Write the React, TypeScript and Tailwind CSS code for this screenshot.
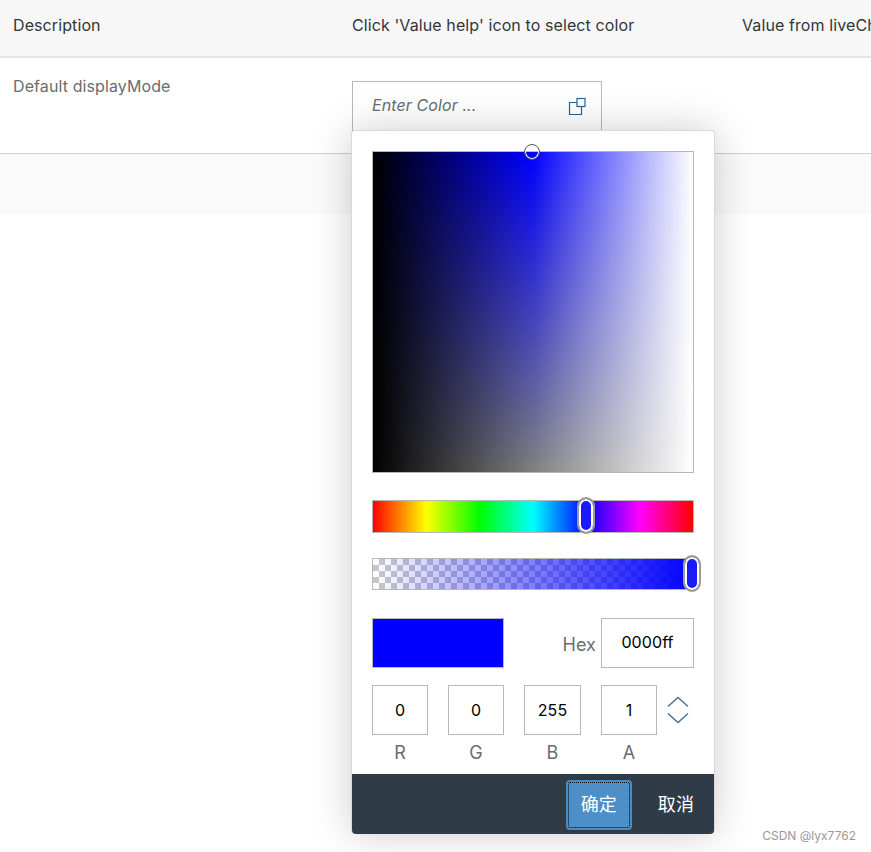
const boxClass = 'flex items-center justify-center border border-[#b8b8b8] bg-white text-base text-black'

function ValueHelpIcon() {
  return (
    <svg width="19" height="19" viewBox="0 0 19 19" fill="none" stroke="#2f5f8f" strokeWidth="1.2">
      <path d="M9 5.5H1.5V17.5H13.5V10" />
      <rect x="9" y="1.5" width="8" height="8" />
    </svg>
  )
}

function Spinner() {
  return (
    <svg width="24" height="28" viewBox="0 0 24 28" fill="none" stroke="#46709c" strokeWidth="1.4">
      <path d="M2 10.5L12 1.5L22 10.5" />
      <path d="M2 17.5L12 26.5L22 17.5" />
    </svg>
  )
}

function Thumb({ className }: { className: string }) {
  return (
    <div className={`absolute w-[18px] h-[37px] rounded-[9px] border-[2px] border-[#9c9c9c] bg-[#1a1aff] shadow-[inset_0_0_0_2px_#fff] ${className}`} />
  )
}

function ColorPalette() {
  const fields = [
    { label: 'R', value: '0', width: 'w-[56px]', gap: 'mr-[20px]' },
    { label: 'G', value: '0', width: 'w-[56px]', gap: 'mr-[20px]' },
    { label: 'B', value: '255', width: 'w-[57px]', gap: 'mr-[20px]' },
    { label: 'A', value: '1', width: 'w-[56px]', gap: 'mr-[9px]' },
  ]

  return (
    <div className="absolute left-[351px] top-[130px] w-[364px] h-[704px] flex flex-col rounded-[4px] bg-white border border-b-0 border-[#d9d9d9] shadow-[0_0_40px_rgba(0,0,0,0.2)] z-10">
      <div className="flex-1 px-[20px] pt-[20px]">
        {/* main colour square */}
        <div className="relative w-[322px] h-[322px] border border-[#b8b8b8] bg-[linear-gradient(to_right,#000,#00f_50%,#fff)]">
          <div className="absolute inset-0 bg-[linear-gradient(to_right,#000,#808080_50%,#fff)] [mask-image:linear-gradient(to_bottom,transparent,black)]" />
          <div className="absolute left-[151px] top-[-8px] w-[16px] h-[16px] rounded-full border border-[#555] shadow-[inset_0_0_0_1px_#fff]" />
        </div>

        {/* hue */}
        <div className="relative mt-[27px] w-[322px] h-[33px] border border-[#b8b8b8] bg-[linear-gradient(to_right,#f00,#ff0_16.67%,#0f0_33.33%,#0ff_50%,#00f_66.67%,#f0f_83.33%,#f00)]">
          <Thumb className="left-[204px] top-[-4px]" />
        </div>

        {/* alpha */}
        <div className="relative mt-[25px] w-[322px] h-[32px] border border-[#b8b8b8] bg-[repeating-conic-gradient(#c9c9c9_0_25%,#fff_0_50%)] bg-[length:12px_12px]">
          <div className="absolute inset-0 bg-[linear-gradient(to_right,rgba(0,0,255,0),#00f)]" />
          <Thumb className="left-[310px] top-[-4px]" />
        </div>

        {/* preview and hex */}
        <div className="mt-[28px] flex items-center w-[322px]">
          <div className="w-[132px] h-[50px] border border-[#b8b8b8] bg-[#0000ff]" />
          <span className="ml-auto mr-[5px] mt-[3px] text-lg text-[#6a6d70]">Hex</span>
          <div className={`${boxClass} w-[93px] h-[50px] pb-[2px]`}>0000ff</div>
        </div>

        {/* rgba */}
        <div className="mt-[17px] flex items-start">
          {fields.map((f) => (
            <div key={f.label} className={`${f.width} ${f.gap} flex flex-col items-center`}>
              <div className={`${boxClass} w-full h-[50px]`}>{f.value}</div>
              <span className="mt-[5px] text-lg leading-[26px] text-[#6a6d70]">{f.label}</span>
            </div>
          ))}
          <div className="flex h-[50px] items-center">
            <Spinner />
          </div>
        </div>
      </div>

      {/* footer */}
      <div className="h-[60px] flex items-center justify-end rounded-b-[4px] bg-[#2f3c48] pt-[2px] pr-[20px] gap-[26px]">
        <button className="w-[66px] h-[50px] rounded-[4px] border-[2px] border-[#4a8cc5] outline outline-1 outline-dotted outline-black -outline-offset-[3px] bg-[#4f8fc8] text-lg text-white">
          确定
        </button>
        <button className="text-lg text-white">取消</button>
      </div>
    </div>
  )
}

export default function App() {
  return (
    <div className="relative w-[871px] h-[852px] overflow-hidden bg-white tracking-[0.1px] font-['Inter','Noto_Sans_CJK_SC',sans-serif]">
      <div className="flex h-[58px] items-center bg-[#f7f7f7] border-b-2 border-[#e5e5e5] pb-[6px] text-base text-[#32363a] whitespace-nowrap">
        <div className="w-[352px] shrink-0 pl-[13px]">Description</div>
        <div className="w-[390px] shrink-0">Click 'Value help' icon to select color</div>
        <div>Value from liveChange</div>
      </div>

      <div className="flex h-[96px] border-b border-[#cfcfcf] text-base text-[#6a6d70]">
        <div className="w-[352px] shrink-0 pl-[13px] pt-[16px]">Default displayMode</div>
        <div className="pt-[23px]">
          <div className="flex items-center justify-between w-[250px] h-[50px] pl-[19px] pr-[14px] border border-[#b8b8b8] bg-white">
            <span className="italic text-[#6a6d70] pb-[2px]">Enter Color ...</span>
            <ValueHelpIcon />
          </div>
        </div>
      </div>

      <div className="h-[60px] bg-[#fafafa]" />

      <ColorPalette />

      <div className="absolute right-[15px] bottom-[7px] text-[12px] tracking-normal text-[#999] z-20">CSDN @lyx7762</div>
    </div>
  )
}
